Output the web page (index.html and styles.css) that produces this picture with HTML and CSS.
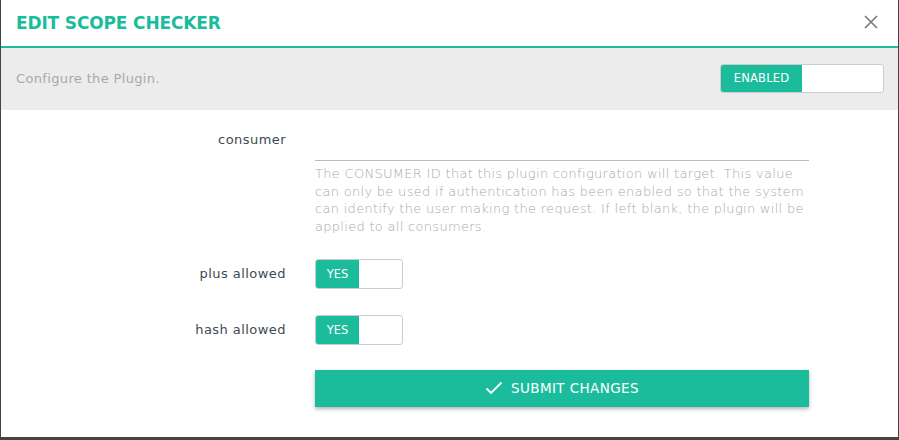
FILE: index.html
```html
<!DOCTYPE html>
<html>
<head>
<meta charset="utf-8">
<link rel="stylesheet" href="styles.css">
</head>
<body>
<div class="modal">
  <div class="header">
    <h1 class="title">EDIT SCOPE CHECKER</h1>
    <span class="close">
      <svg width="14" height="14" viewBox="0 0 14 14"><path d="M1 1 L13 13 M13 1 L1 13" stroke="#777" stroke-width="1.6" fill="none"/></svg>
    </span>
  </div>
  <div class="band">
    <span class="band-text">Configure the Plugin.</span>
    <div class="toggle toggle-lg">
      <span class="toggle-on">ENABLED</span>
      <span class="toggle-off"></span>
    </div>
  </div>
  <div class="form">
    <div class="row row-consumer">
      <label class="label">consumer</label>
      <div class="field">
        <div class="input"></div>
        <p class="help">The CONSUMER ID that this plugin configuration will target. This value can only be used if authentication has been enabled so that the system can identify the user making the request. If left blank, the plugin will be applied to all consumers.</p>
      </div>
    </div>
    <div class="row row-toggle">
      <label class="label">plus allowed</label>
      <div class="field">
        <div class="toggle toggle-sm"><span class="toggle-on">YES</span><span class="toggle-off"></span></div>
      </div>
    </div>
    <div class="row row-toggle">
      <label class="label">hash allowed</label>
      <div class="field">
        <div class="toggle toggle-sm"><span class="toggle-on">YES</span><span class="toggle-off"></span></div>
      </div>
    </div>
    <div class="row row-submit">
      <div class="label"></div>
      <div class="field">
        <button class="submit">
          <svg width="18" height="14" viewBox="0 0 18 14"><path d="M1.5 7.5 L6 12 L16.5 1.5" stroke="#fff" stroke-width="1.8" fill="none"/></svg>
          <span>SUBMIT CHANGES</span>
        </button>
      </div>
    </div>
  </div>
</div>
</body>
</html>
```
FILE: styles.css
```css
html, body {
  margin: 0;
  padding: 0;
  background: #444;
  font-family: "DejaVu Sans", "Open Sans", sans-serif;
}
.modal {
  margin-left: 1px;
  width: 897px;
  height: 437px;
  background: #fff;
  box-sizing: border-box;
}
.header {
  height: 48px;
  box-sizing: border-box;
  border-bottom: 2px solid #1abc9c;
  display: flex;
  align-items: center;
  justify-content: space-between;
  padding: 0 20px 0 15px;
}
.title {
  margin: 0;
  font-size: 17px;
  font-weight: bold;
  color: #1abc9c;
  letter-spacing: -0.15px;
}
.close {
  display: flex;
  margin-top: -3px;
}
.band {
  height: 62px;
  background: #ececec;
  display: flex;
  align-items: center;
  justify-content: space-between;
  padding: 0 14px 0 15px;
}
.band-text {
  font-size: 13px;
  letter-spacing: 0.35px;
  color: #a9a9a9;
  margin-top: -2px;
}
.toggle {
  display: flex;
  border: 1px solid #ccc;
  border-radius: 3px;
  background: #fff;
  overflow: hidden;
  box-sizing: border-box;
}
.toggle-on {
  background: #1abc9c;
  color: #fff;
  display: flex;
  align-items: center;
  justify-content: center;
}
.toggle-lg {
  width: 164px;
  height: 29px;
  margin-top: -2px;
}
.toggle-lg .toggle-on {
  width: 81px;
  font-size: 11.5px;
  letter-spacing: 0.2px;
}
.toggle-sm {
  width: 88px;
  height: 30px;
}
.toggle-sm .toggle-on {
  width: 43px;
  font-size: 11.5px;
}
.form {
  padding-top: 22px;
}
.row {
  display: flex;
}
.label {
  width: 285px;
  flex: none;
  text-align: right;
  font-size: 13px;
  letter-spacing: 0.45px;
  color: #3d4a54;
  font-weight: 500;
}
.field {
  margin-left: 29px;
  width: 494px;
}
.input {
  height: 28px;
  border-bottom: 1px solid #bbb;
}
.help {
  margin: 4px 0 0;
  font-size: 13px;
  letter-spacing: 0.3px;
  line-height: 17.7px;
  color: #a9a9a9;
  font-weight: 300;
}
.row-toggle {
  align-items: center;
  margin-top: 23px;
}
.row-toggle + .row-toggle {
  margin-top: 26px;
}
.row-submit {
  margin-top: 25px;
}
.submit {
  width: 494px;
  height: 37px;
  border: 0;
  background: #1abc9c;
  color: #fff;
  font-family: inherit;
  font-size: 13.5px;
  letter-spacing: 0.4px;
  display: flex;
  align-items: center;
  justify-content: center;
  gap: 8px;
  box-shadow: 0 2px 4px rgba(0,0,0,0.3);
  padding: 0;
}
```
